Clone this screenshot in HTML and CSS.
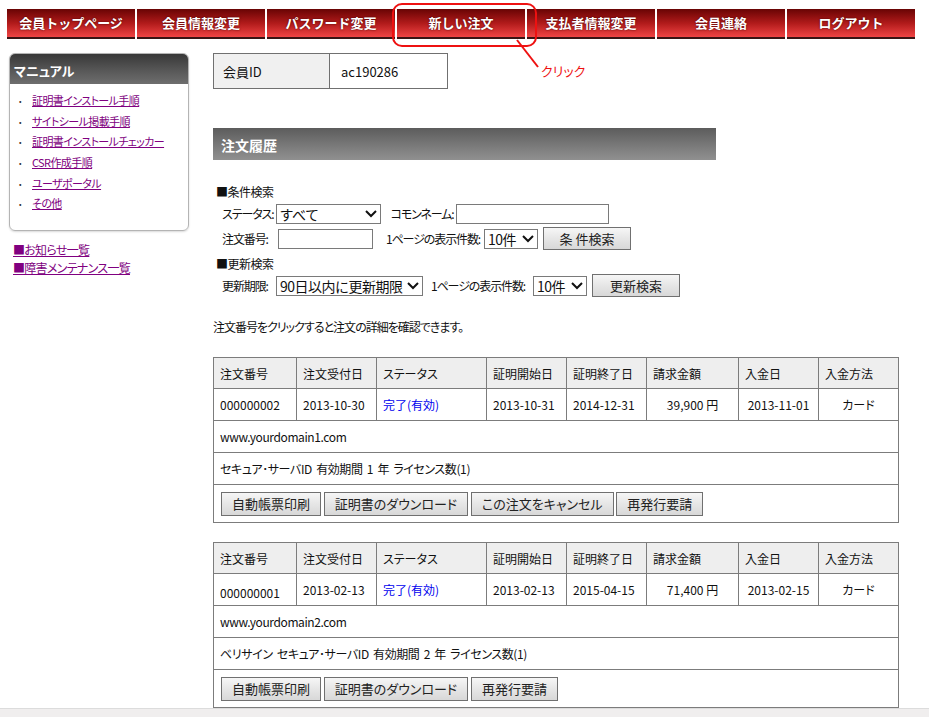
FILE: index.html
```html
<!DOCTYPE html>
<html lang="ja">
<head>
  <meta charset="UTF-8" />
  <title>注文履歴</title>
  <link rel="stylesheet" href="styles.css">
</head>
<body>

  <nav class="topnav">
    <a href="#">会員トップページ</a>
    <a href="#">会員情報変更</a>
    <a href="#">パスワード変更</a>
    <a href="#">新しい注文</a>
    <a href="#">支払者情報変更</a>
    <a href="#">会員連絡</a>
    <a href="#">ログアウト</a>
  </nav>

  <!-- red note drawn over the menu -->
  <div class="note">
    <svg width="160" height="80" viewBox="0 0 160 80">
      <rect x="2" y="2" width="143" height="42" rx="9" fill="none" stroke="#ee1111" stroke-width="2"/>
      <line x1="126" y1="38" x2="147" y2="65" stroke="#ee1111" stroke-width="2"/>
    </svg>
    <span class="note-text">クリック</span>
  </div>

  <div class="layout">
    <aside class="side">
      <div class="manual">
        <div class="manual-head">マニュアル</div>
        <ul>
          <li><a href="#">証明書インストール手順</a></li>
          <li><a href="#">サイトシール掲載手順</a></li>
          <li><a href="#">証明書インストールチェッカー</a></li>
          <li><a href="#">CSR作成手順</a></li>
          <li><a href="#">ユーザポータル</a></li>
          <li><a href="#">その他</a></li>
        </ul>
      </div>
      <a class="side-link" href="#">■お知らせ一覧</a>
      <a class="side-link" href="#">■障害メンテナンス一覧</a>
    </aside>

    <main class="main">
      <table class="member">
        <tr>
          <th>会員ID</th>
          <td>ac190286</td>
        </tr>
      </table>

      <h2 class="heading">注文履歴</h2>

      <div class="search">
        <div class="search-title">■条件検索</div>
        <div class="row">
          <span class="lbl w51">ステータス:</span>
          <span class="sel w105"><select><option>すべて</option></select><svg class="chev" width="12" height="8" viewBox="0 0 12 8"><path d="M1 1l5 5 5-5" fill="none" stroke="#111" stroke-width="2"/></svg></span>
          <span class="lbl ml10 w62">コモンネーム:</span>
          <input class="txt w153" type="text">
        </div>
        <div class="row">
          <span class="lbl w54">注文番号:</span>
          <input class="txt w95" type="text">
          <span class="lbl ml13 w96">1ページの表示件数:</span>
          <span class="sel w54"><select><option>10件</option></select><svg class="chev" width="12" height="8" viewBox="0 0 12 8"><path d="M1 1l5 5 5-5" fill="none" stroke="#111" stroke-width="2"/></svg></span>
          <button class="btn ml5 w88">条 件検索</button>
        </div>
        <div class="search-title second">■更新検索</div>
        <div class="row">
          <span class="lbl w52">更新期限:</span>
          <span class="sel w147"><select><option>90日以内に更新期限</option></select><svg class="chev" width="12" height="8" viewBox="0 0 12 8"><path d="M1 1l5 5 5-5" fill="none" stroke="#111" stroke-width="2"/></svg></span>
          <span class="lbl ml8 w100">1ページの表示件数:</span>
          <span class="sel w54"><select><option>10件</option></select><svg class="chev" width="12" height="8" viewBox="0 0 12 8"><path d="M1 1l5 5 5-5" fill="none" stroke="#111" stroke-width="2"/></svg></span>
          <button class="btn ml5 w88">更新検索</button>
        </div>
      </div>

      <p class="notice">注文番号をクリックすると注文の詳細を確認できます。</p>

      <table class="orders">
        <colgroup>
          <col style="width:83px"><col style="width:80px"><col style="width:110px"><col style="width:80px">
          <col style="width:80px"><col style="width:92px"><col style="width:80px"><col style="width:80px">
        </colgroup>
        <tr class="head">
          <th>注文番号</th><th>注文受付日</th><th>ステータス</th><th>証明開始日</th>
          <th>証明終了日</th><th>請求金額</th><th>入金日</th><th>入金方法</th>
        </tr>
        <tr class="data">
          <td>000000002</td><td>2013-10-30</td><td><a class="status" href="#">完了(有効)</a></td><td>2013-10-31</td>
          <td>2014-12-31</td><td class="c">39,900 円</td><td class="c">2013-11-01</td><td class="c">カード</td>
        </tr>
        <tr class="data"><td class="wide" colspan="8">www.yourdomain1.com</td></tr>
        <tr class="data"><td class="wide" colspan="8">セキュア･サーバID 有効期間 1 年 ライセンス数(1)</td></tr>
        <tr class="actions">
          <td colspan="8">
            <button class="btn">自動帳票印刷</button>
            <button class="btn">証明書のダウンロード</button>
            <button class="btn">この注文をキャンセル</button>
            <button class="btn">再発行要請</button>
          </td>
        </tr>
      </table>

      <table class="orders">
        <colgroup>
          <col style="width:83px"><col style="width:80px"><col style="width:110px"><col style="width:80px">
          <col style="width:80px"><col style="width:92px"><col style="width:80px"><col style="width:80px">
        </colgroup>
        <tr class="head">
          <th>注文番号</th><th>注文受付日</th><th>ステータス</th><th>証明開始日</th>
          <th>証明終了日</th><th>請求金額</th><th>入金日</th><th>入金方法</th>
        </tr>
        <tr class="data">
          <td class="low">000000001</td><td>2013-02-13</td><td><a class="status" href="#">完了(有効)</a></td><td>2013-02-13</td>
          <td>2015-04-15</td><td class="c">71,400 円</td><td class="c">2013-02-15</td><td class="c">カード</td>
        </tr>
        <tr class="data"><td class="wide" colspan="8">www.yourdomain2.com</td></tr>
        <tr class="data"><td class="wide" colspan="8">ベリサイン セキュア･サーバID 有効期間 2 年 ライセンス数(1)</td></tr>
        <tr class="actions">
          <td colspan="8">
            <button class="btn">自動帳票印刷</button>
            <button class="btn">証明書のダウンロード</button>
            <button class="btn">再発行要請</button>
          </td>
        </tr>
      </table>
    </main>
  </div>

  <div class="scrollbar"></div>

</body>
</html>
```

FILE: styles.css
```css
body {
  margin: 0;
  padding: 0;
  background: #fff;
  color: #111;
  font-family: "Noto Sans CJK JP", "Liberation Sans", sans-serif;
  font-size: 12px;
  font-feature-settings: "palt";
}

/* top menu */
.topnav {
  display: flex;
  gap: 2px;
  margin: 9px 0 0 7px;
}

.topnav a {
  width: 128px;
  height: 28px;
  line-height: 28px;
  text-align: center;
  color: #fff;
  font-size: 13px;
  font-weight: bold;
  font-feature-settings: normal;
  text-decoration: none;
  background: linear-gradient(#680404, #b01a1a 50%, #f04444);
  border-bottom: 2px solid #3a1414;
  text-shadow: 0 0 2px #400;
}

.note {
  position: absolute;
  left: 391px;
  top: 2px;
}

.note svg {
  display: block;
}

.note-text {
  position: absolute;
  left: 150px;
  top: 59px;
  color: #ee1111;
  font-size: 13px;
  white-space: nowrap;
}

.layout {
  display: flex;
}

/* left side */
.side {
  width: 180px;
  margin: 14px 0 0 9px;
}

.manual {
  border: 1px solid #b4b4b4;
  border-radius: 6px;
  overflow: hidden;
  box-shadow: 0 1px 2px rgba(0,0,0,0.15);
}

.manual-head {
  height: 30px;
  line-height: 34px;
  padding-left: 4px;
  color: #fff;
  font-size: 13px;
  font-weight: bold;
  background: linear-gradient(#383838, #5a5a5a 60%, #6e6e6e);
}

.manual ul {
  list-style: none;
  margin: 0;
  padding: 6px 0 16px 8px;
}

.manual li {
  height: 20.7px;
  line-height: 20.7px;
  font-size: 11px;
  letter-spacing: -0.6px;
}

.manual li::before {
  content: "・";
  display: inline-block;
  width: 14px;
  font-size: 9px;
  color: #333;
}

.manual li a,
.side-link {
  color: #800080;
}

.side-link {
  display: block;
  font-size: 12px;
  letter-spacing: -0.7px;
  line-height: 18px;
  margin-left: 4px;
}

.manual + .side-link {
  margin-top: 10px;
}

/* main column */
.main {
  margin: 14px 0 0 24px;
  width: 685px;
}

.member {
  border-collapse: collapse;
  font-size: 13px;
}

.member th,
.member td {
  height: 34px;
  border: 1px solid #707070;
  padding: 0;
  text-align: left;
  font-weight: normal;
}

.member th {
  width: 106px;
  padding-left: 9px;
  background: #f0f0f0;
}

.member td {
  width: 106px;
  padding-left: 11px;
}

.heading {
  width: 495px;
  height: 32px;
  line-height: 34px;
  margin: 39px 0 0 0;
  padding-left: 8px;
  color: #fff;
  font-size: 14px;
  font-weight: bold;
  background: linear-gradient(#5c5c5c, #7c7c7c 60%, #909090);
}

.search {
  padding-left: 3px;
}

.search-title {
  margin-top: 24px;
  line-height: 16px;
  font-size: 12px;
  letter-spacing: -0.5px;
}

.search-title.second {
  margin-top: 6px;
}

.row {
  display: flex;
  align-items: center;
  height: 23px;
  margin-top: 2px;
  padding-left: 6px;
}

.lbl {
  flex-shrink: 0;
  margin-right: 2px;
  font-size: 12px;
  letter-spacing: -1.1px;
  white-space: nowrap;
}

.w51 { min-width: 51px; }
.w52 { min-width: 52px; }
.w54 { min-width: 54px; width: 54px; }
.w62 { min-width: 62px; }
.w96 { min-width: 96px; }
.w100 { min-width: 100px; }
.w88 { width: 88px; }
.w95 { width: 95px; }
.w105 { width: 105px; }
.w147 { width: 147px; }
.w153 { width: 153px; }
.ml5 { margin-left: 5px; }
.ml8 { margin-left: 8px; }
.ml10 { margin-left: 10px; }
.ml13 { margin-left: 13px; }

.sel {
  position: relative;
  flex-shrink: 0;
  height: 20px;
}

.sel select {
  appearance: none;
  -webkit-appearance: none;
  width: 100%;
  height: 20px;
  margin: 0;
  padding: 0 0 0 3px;
  border: 1px solid #7a7a7a;
  border-radius: 0;
  background: #fff;
  color: #111;
  font-family: inherit;
  font-size: 14px;
  line-height: 18px;
  letter-spacing: -0.5px;
}

.sel .chev {
  position: absolute;
  right: 4px;
  top: 6px;
  pointer-events: none;
}

.txt {
  box-sizing: border-box;
  flex-shrink: 0;
  height: 20px;
  margin: 0;
  border: 1px solid #7a7a7a;
  padding: 0 2px;
}

.btn {
  height: 23px;
  padding: 0 10px;
  border: 1px solid #707070;
  border-radius: 0;
  background: linear-gradient(#f6f6f6, #e6e6e6 50%, #d8d8d8);
  color: #222;
  font-family: inherit;
  font-size: 13px;
  font-feature-settings: "palt";
  cursor: pointer;
}

.notice {
  margin: 22px 0 0 0;
  line-height: 16px;
  font-size: 12px;
  letter-spacing: -1px;
}

/* order tables */
.orders {
  width: 685px;
  border-collapse: collapse;
  table-layout: fixed;
  margin-top: 22px;
}

.orders + .orders {
  margin-top: 19px;
}

.orders th,
.orders td {
  border: 1px solid #7c7c7c;
  padding: 0 0 0 6px;
  text-align: left;
  font-weight: normal;
  font-size: 12px;
  white-space: nowrap;
}

.orders .head th {
  height: 30px;
  background: #eeeeee;
}

.orders .data td {
  height: 31px;
}

.orders td.wide {
  letter-spacing: -0.4px;
  word-spacing: 2px;
}

.orders td.c {
  text-align: center;
  padding: 0;
}

.orders td.low {
  padding-top: 5px;
  height: 26px;
}

.status {
  color: #0000ee;
  text-decoration: none;
}

.orders .actions td {
  height: 37px;
  padding-left: 7px;
}

.actions .btn {
  height: 24px;
}

.scrollbar {
  position: fixed;
  left: 0;
  right: 0;
  bottom: 0;
  height: 8px;
  background: #f0eeee;
  border-top: 1px solid #dcdcdc;
}
```
